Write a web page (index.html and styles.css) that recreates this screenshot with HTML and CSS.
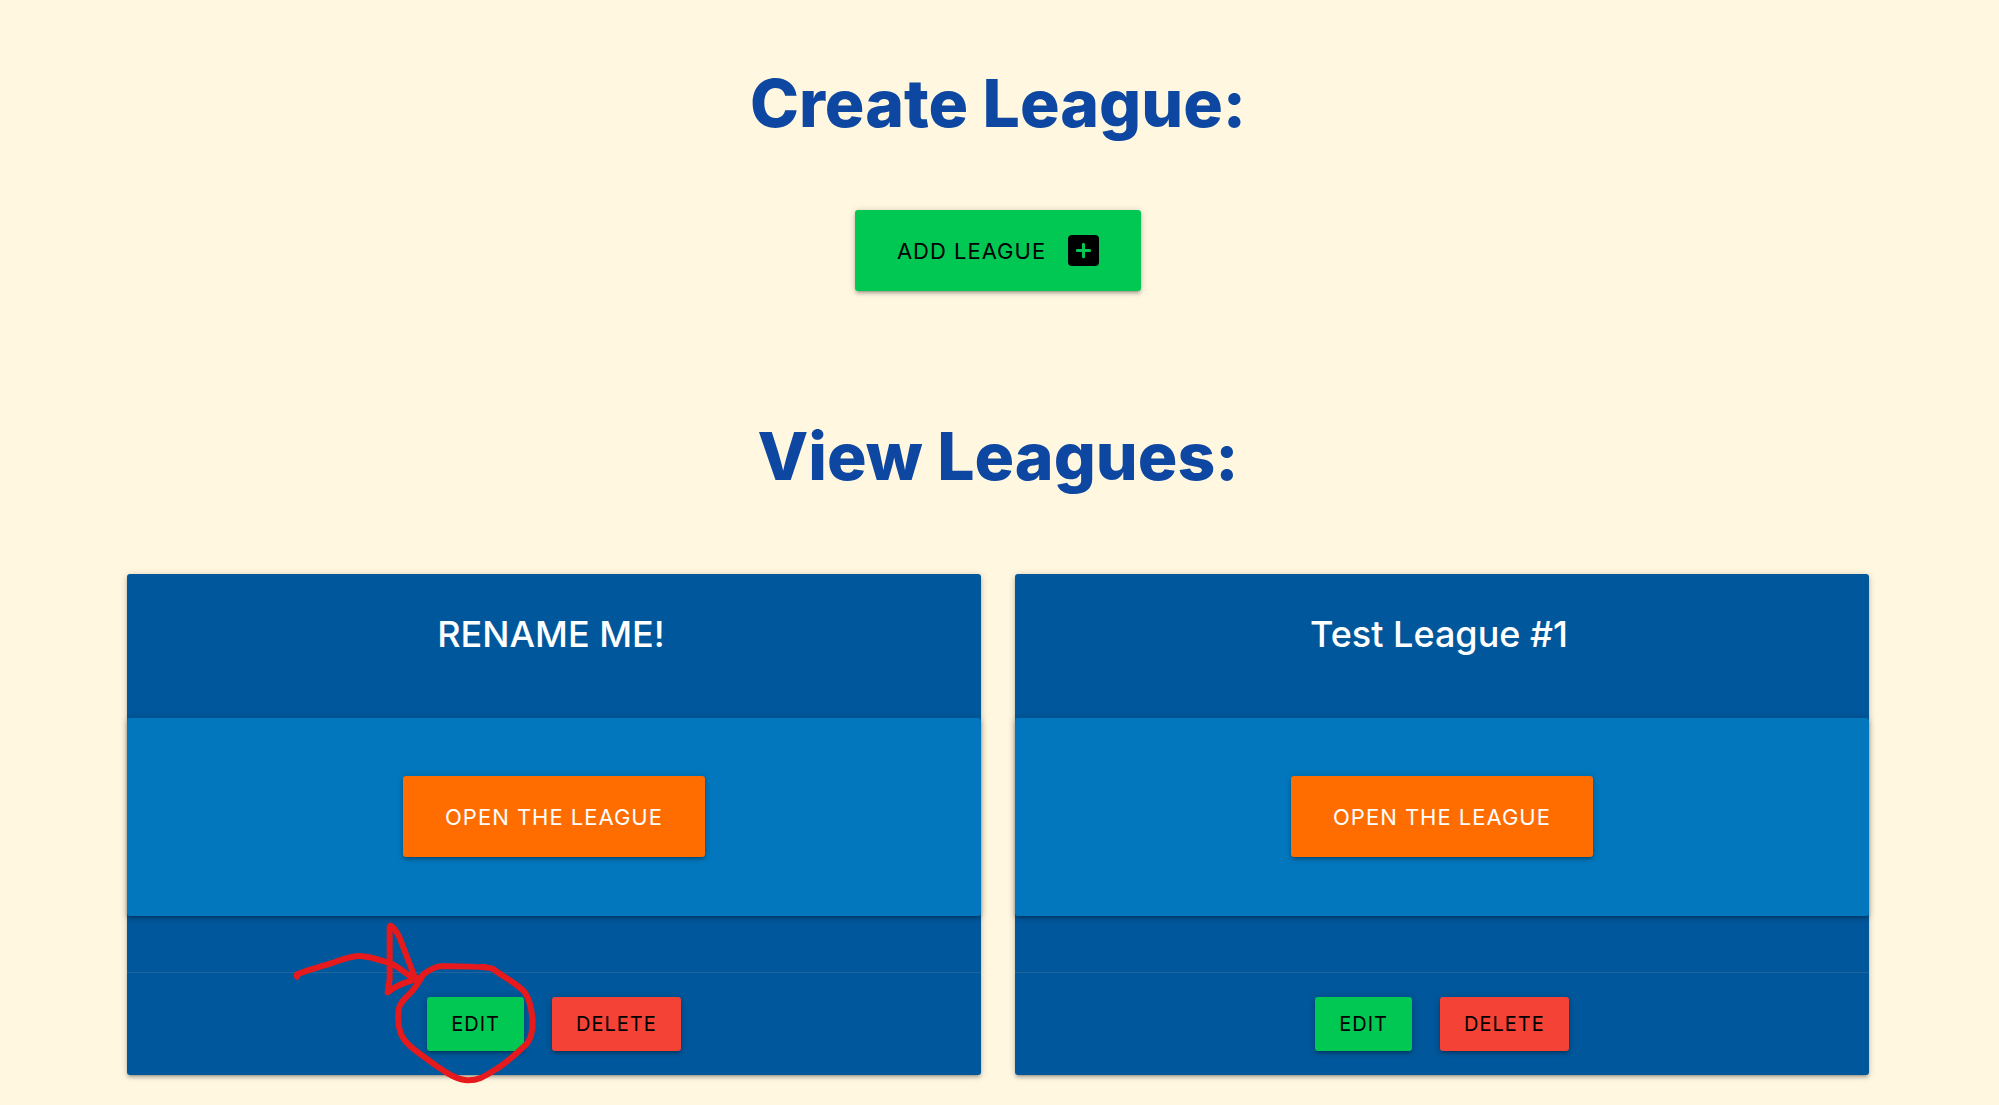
FILE: index.html
```html
<!DOCTYPE html>
<html lang="en">
<head>
<meta charset="utf-8">
<meta name="viewport" content="width=device-width, initial-scale=1">
<title>Leagues</title>
<link rel="stylesheet" href="styles.css">
</head>
<body>
<main class="page">
  <section class="create">
    <h1 class="heading">Create League:</h1>
    <button class="btn btn-large btn-green" type="button">
      ADD LEAGUE
      <svg class="btn-icon" viewBox="0 0 31 31" aria-hidden="true">
        <rect width="31" height="31" rx="4" fill="#000"/>
        <path d="M15.500 9.300V21.700M9.300 15.500H21.700" stroke="#00c853" stroke-width="3" stroke-linecap="round"/>
      </svg>
    </button>
  </section>

  <section class="view">
    <h1 class="heading">View Leagues:</h1>
    <div class="cards">
      <article class="card">
        <h2 class="card-title">RENAME ME!</h2>
        <div class="card-panel">
          <button class="btn btn-large btn-orange" type="button">OPEN THE LEAGUE</button>
        </div>
        <div class="card-action">
          <div class="marked">
            <button class="btn btn-green" type="button">EDIT</button>
            <svg class="mark" viewBox="0 0 1320 615" aria-hidden="true">
              <path d="M81 230Q76 224 86 221C110 210 145 202 180 191C220 178 240 168 268 168C300 168 335 182 366 192C390 203 410 225 440 240M436 236C420 195 405 155 388 111C380 95 372 82 362 77Q358 76 359 90V238L353 277Q376 258 408 247Q430 240 452 233"/>
              <path d="M668 206C650 200 560 198 508 199C490 203 470 215 460 223C450 240 445 252 425 275C405 295 390 308 387 325C383 350 383 375 392 400C405 432 440 455 475 480C515 509 550 535 585 540C625 545 650 525 690 500C725 475 750 450 770 432C785 413 788 390 788 365C786 335 780 300 765 278C745 252 705 235 668 206L638 200"/>
            </svg>
          </div>
          <button class="btn btn-red" type="button">DELETE</button>
        </div>
      </article>
      <article class="card">
        <h2 class="card-title">Test League #1</h2>
        <div class="card-panel">
          <button class="btn btn-large btn-orange" type="button">OPEN THE LEAGUE</button>
        </div>
        <div class="card-action">
          <button class="btn btn-green" type="button">EDIT</button>
          <button class="btn btn-red" type="button">DELETE</button>
        </div>
      </article>
    </div>
  </section>
</main>
</body>
</html>
```
FILE: styles.css
```css
* {
  box-sizing: border-box;
}

body {
  margin: 0;
  background: #fff7e0;
  font-family: Inter, "Liberation Sans", sans-serif;
}

.page {
  padding: 64px 130px 30px 127px;
}

.create,
.view {
  display: flex;
  flex-direction: column;
  align-items: center;
}

.create {
  margin-bottom: 126px;
}

.heading {
  margin: 0 0 68px;
  color: #0d47a1;
  font-size: 66px;
  font-weight: 800;
  line-height: 78px;
  text-align: center;
}

.view .heading {
  margin-bottom: 79px;
}

.btn {
  display: flex;
  align-items: center;
  justify-content: center;
  height: 54px;
  padding: 0 24px;
  border: 0;
  border-radius: 3px;
  color: #000;
  font-family: inherit;
  font-size: 20px;
  letter-spacing: 1px;
  white-space: nowrap;
  cursor: pointer;
}

.btn,
.card,
.card-panel {
  box-shadow: 0 3px 3px rgba(0, 0, 0, 0.14), 0 4px 1px -3px rgba(0, 0, 0, 0.12), 0 1px 7px rgba(0, 0, 0, 0.2);
}

.btn-large {
  height: 81px;
  padding: 0 42px;
  font-size: 22px;
}

.btn-green {
  background: #00c853;
}

.btn-orange {
  background: #ff6d00;
  color: #fff;
}

.btn-red {
  background: #f44336;
}

.btn-icon {
  width: 31px;
  height: 31px;
  margin-left: 22px;
}

.cards {
  display: grid;
  grid-template-columns: 1fr 1fr;
  gap: 34px;
  width: 100%;
}

.card {
  border-radius: 3px;
  background: #01579b;
}

.card-title {
  margin: 0;
  padding: 36px 42px 60px 36px;
  color: #fff;
  font-size: 36px;
  font-weight: 500;
  line-height: 48px;
  text-align: center;
}

.card-panel {
  display: flex;
  justify-content: center;
  margin-bottom: 56px;
  padding: 58px 36px 59px;
  border-radius: 3px;
  background: #0277bd;
}

.card-action {
  display: flex;
  justify-content: center;
  gap: 28px;
  padding: 24px;
  border-top: 1px solid rgba(160, 160, 160, 0.2);
}

.marked {
  position: relative;
}

.mark {
  position: absolute;
  top: -97px;
  left: -157px;
  width: 440px;
  height: 205px;
  fill: none;
  stroke: #e61a1c;
  stroke-width: 18;
  stroke-linecap: round;
  stroke-linejoin: round;
  pointer-events: none;
}
```
